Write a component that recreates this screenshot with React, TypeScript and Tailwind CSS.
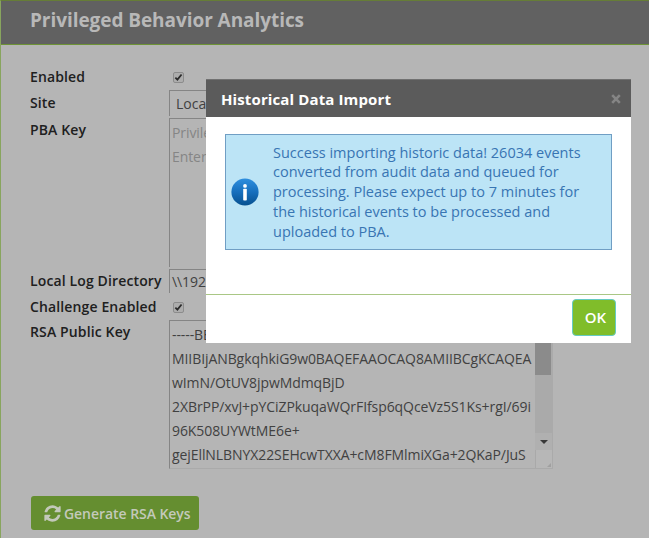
import type { ReactNode } from "react";

function Checkbox() {
  return (
    <span className="flex h-[11px] w-[11px] items-center justify-center rounded-[2px] border border-[#8c8c8c] bg-[#adadad]">
      <svg viewBox="0 0 10 10" className="h-[9px] w-[9px] shrink-0" fill="none" stroke="#2c2c2c" strokeWidth="2">
        <path d="M1.5 5.2 3.8 7.4 8.4 1.6" />
      </svg>
    </span>
  );
}

function Label({ children, className }: { children: ReactNode; className: string }) {
  return <div className={`w-[139px] shrink-0 whitespace-nowrap font-semibold leading-5 tracking-[0.13px] text-[#202020] ${className}`}>{children}</div>;
}

function RefreshIcon() {
  return (
    <svg viewBox="0 0 1792 1792" className="h-[19px] w-[19px]" fill="currentColor">
      <path d="M1639 1056q0 5-1 7-64 268-268 434.5t-478 166.5q-146 0-282.5-55t-243.5-157l-129 129q-19 19-45 19t-45-19-19-45v-448q0-26 19-45t45-19h448q26 0 45 19t19 45-19 45l-137 137q71 66 161 102t187 36q134 0 250-65t186-179q11-17 53-117 8-23 30-23h192q13 0 22.5 9.5t9.5 22.5zm25-800v448q0 26-19 45t-45 19h-448q-26 0-45-19t-19-45 19-45l138-138q-148-137-349-137-134 0-250 65t-186 179q-11 17-53 117-8 23-30 23h-199q-13 0-22.5-9.5t-9.5-22.5v-7q65-268 270-434.5t480-166.5q146 0 284 55.5t245 156.5l130-129q19-19 45-19t45 19 19 45z" />
    </svg>
  );
}

function InfoIcon() {
  return (
    <svg viewBox="0 0 28 28" className="h-7 w-7 shrink-0">
      <defs>
        <linearGradient id="info" x1="0" y1="0" x2="0" y2="1">
          <stop offset="0" stopColor="#2f8fdf" />
          <stop offset="0.5" stopColor="#176fbd" />
          <stop offset="1" stopColor="#07508f" />
        </linearGradient>
      </defs>
      <circle cx="14" cy="14" r="13.6" fill="url(#info)" />
      <circle cx="14" cy="7.9" r="1.9" fill="#fff" />
      <rect x="12.2" y="10.8" width="3.6" height="11.7" rx="0.8" fill="#fff" />
    </svg>
  );
}

const keyLines = [
  "-----BEGIN PUBLIC KEY-----",
  "MIIBIjANBgkqhkiG9w0BAQEFAAOCAQ8AMIIBCgKCAQEA",
  "wImN/OtUV8jpwMdmqBjD",
  "2XBrPP/xvJ+pYCiZPkuqaWQrFIfsp6qQceVz5S1Ks+rgI/69i",
  "96K508UYWtME6e+",
  "gejEllNLBNYX22SEHcwTXXA+cM8FMlmiXGa+2QKaP/JuS",
];

const messageLines = [
  "Success importing historic data! 26034 events",
  "converted from audit data and queued for",
  "processing. Please expect up to 7 minutes for",
  "the historical events to be processed and",
  "uploaded to PBA.",
];

function SettingsPage() {
  return (
    <div className="flex h-[538px] flex-col border-l border-t border-[#88a55e] border-t-[#667d37] bg-[#b5b5b5] text-[14px]">
      <header className="h-[44px] shrink-0 border-b border-[#6e9336] bg-[#616161] pl-[29px]">
        <h1 className="text-[19px] font-bold leading-[38px] tracking-[-0.06px] text-[#b8b8b8]">Privileged Behavior Analytics</h1>
      </header>
      <main className="flex flex-col pl-[29px] pt-[21px]">
        <div className="flex h-[24px]">
          <Label className="pt-px">Enabled</Label>
          <div className="pl-[4px] pt-[6px]"><Checkbox /></div>
        </div>
        <div className="flex h-[28px]">
          <Label className="pt-[3px]">Site</Label>
          <div className="h-[26px] w-[200px] border-l border-t border-[#858585] pl-[6px] leading-[25px] text-[#414141]">Local</div>
        </div>
        <div className="flex h-[151px]">
          <Label className="pt-[2px]">PBA Key</Label>
          <div className="h-[149px] w-[384px] border-l border-t border-[#858585] pl-[2px] pt-[2px] leading-6 tracking-[-0.08px] text-[#858585]">
            <div>Privileged Behavior Analytics</div>
            <div>Enter the key</div>
          </div>
        </div>
        <div className="flex h-[27px]">
          <Label className="pt-[2px]">Local Log Directory</Label>
          <div className="h-[24px] w-[384px] border-l border-t border-[#858585] pl-[2px] leading-[23px] tracking-[-0.08px] text-[#414141]">\\192.168.1.10</div>
        </div>
        <div className="flex h-[24px]">
          <Label className="pt-[1px]">Challenge Enabled</Label>
          <div className="pl-[4px] pt-[6px]"><Checkbox /></div>
        </div>
        <div className="flex h-[149px]">
          <Label className="pt-[2px]">RSA Public Key</Label>
          <div className="flex h-[149px] w-[384px] border border-[#aaaaaa] border-l-[#858585] border-t-[#858585]">
            <div className="w-[365px] overflow-hidden whitespace-nowrap pl-[2px] pt-[2px] leading-6 tracking-[-0.08px] text-[#414141]">
              {keyLines.map((line) => (
                <div key={line}>{line}</div>
              ))}
            </div>
            <div className="flex w-[17px] flex-col bg-[#aaaaaa]">
              <div className="mt-[17px] h-[37px] w-4 bg-[#8b8b8b]" />
              <div className="mt-auto flex h-[17px] items-center justify-center bg-[#b0b0b0]">
                <div className="border-x-4 border-t-4 border-x-transparent border-t-[#383838]" />
              </div>
              <div className="flex h-[18px] items-end justify-end border-l border-[#a9a9a9] bg-[#b7b7b7] p-[1px]">
                <svg viewBox="0 0 4 4" className="h-1 w-1"><path d="M4 0V4H0Z" fill="#a0a0a0" /></svg>
              </div>
            </div>
          </div>
        </div>
        <button className="ml-px mt-[27px] flex h-[34px] w-[168px] items-center gap-[2px] self-start whitespace-nowrap rounded-[3px] bg-[#658e30] pl-[12px] font-semibold tracking-[-0.05px] text-[#c3c9ba]">
          <RefreshIcon />
          <span>Generate RSA Keys</span>
        </button>
      </main>
    </div>
  );
}

function Dialog() {
  return (
    <div className="absolute left-[206px] top-[79px] flex h-[264px] w-[425px] flex-col bg-white">
      <header className="flex h-[38px] shrink-0 items-center justify-between border-t border-[#717171] bg-[#5b5b5b] pl-[15px] pr-[10px]">
        <h2 className="pt-px text-[15px] font-bold tracking-[0.12px] text-white">Historical Data Import</h2>
        <svg viewBox="0 0 10 10" className="h-[10px] w-[10px]" stroke="#858585" strokeWidth="2.6"><path d="M1.2 1.2 8.8 8.8M8.8 1.2 1.2 8.8" /></svg>
      </header>
      <div className="flex h-[178px] flex-col border-b border-[#a9c785] px-[19px] pt-[17px]">
        <div className="flex h-[116px] items-center border border-[#709ec4] bg-[#bce4f6] pl-[5px]">
          <InfoIcon />
          <div className="whitespace-nowrap pl-[14px] text-[14.5px] leading-[19.7px] text-[#3875b3]">
            {messageLines.map((line) => (
              <div key={line}>{line}</div>
            ))}
          </div>
        </div>
      </div>
      <footer className="flex justify-end pr-[15px] pt-[4px]">
        <button className="h-[37px] w-[44px] rounded-[4px] border border-[#65cbc3] bg-[#80bd2a] pl-[3px] text-[15px] font-semibold text-white">OK</button>
      </footer>
    </div>
  );
}

export default function App() {
  return (
    <div className="relative h-[538px] w-[649px] overflow-hidden font-['Open_Sans',sans-serif]">
      <SettingsPage />
      <Dialog />
    </div>
  );
}
